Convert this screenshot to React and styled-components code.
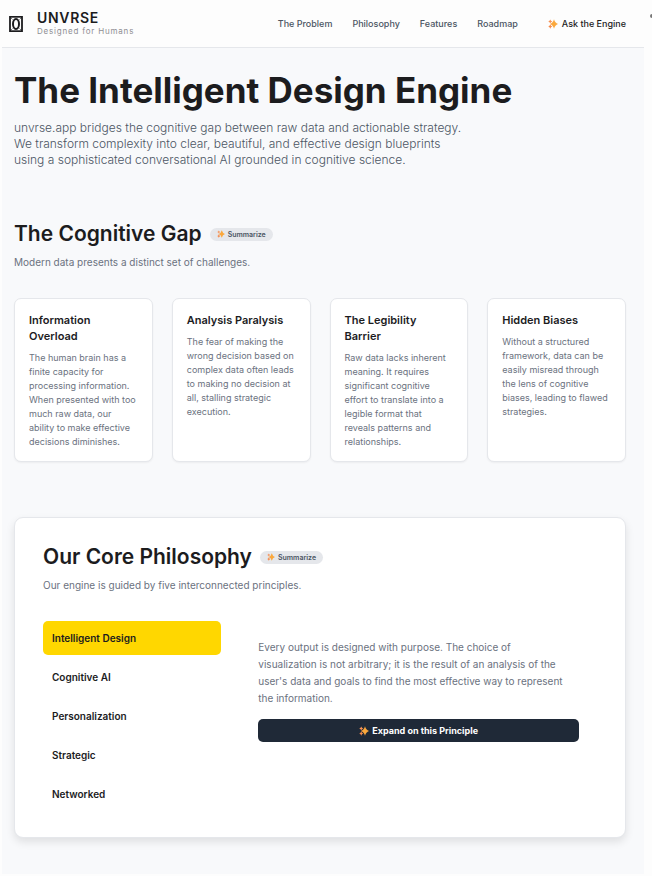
import { useState } from 'react'
import styled, { createGlobalStyle } from 'styled-components'

const GlobalStyle = createGlobalStyle`
    * {
        box-sizing: border-box;
    }
    body {
        margin: 0;
        background-color: #fdfdfd;
        color: #1c1c1e;
        font-family: Inter, 'Liberation Sans', sans-serif;
    }
    h1, h2, h3, p {
        margin: 0;
    }
    button {
        font-family: inherit;
        border: none;
        cursor: pointer;
    }
`

const Page = styled.div`
    position: relative;
    padding: 0 8px 2px 2px;
`
const ScrollMark = styled.span`
    position: absolute;
    top: 14px;
    right: 0;
    width: 2px;
    height: 4px;
    border-radius: 2px 0 0 2px;
    background-color: #777;
`
const Header = styled.header`
    display: flex;
    align-items: center;
    justify-content: space-between;
    height: 48px;
    padding: 0 18px 0 7px;
    border-bottom: 1px solid #e5e7eb;
`
const Brand = styled.a`
    display: flex;
    align-items: center;
    gap: 14px;
    color: inherit;
    text-decoration: none;
`
const BrandText = styled.span`
    display: flex;
    flex-direction: column;
`
const BrandName = styled.span`
    font-size: 14px;
    font-weight: 600;
    line-height: 14px;
    letter-spacing: 0.05em;
`
const Tagline = styled.span`
    font-size: 8px;
    line-height: 12px;
    letter-spacing: 0.1em;
    color: #8e8e93;
`
const Nav = styled.nav`
    display: flex;
    align-items: center;
    gap: 20px;
`
const NavLink = styled.a`
    font-size: 9px;
    font-weight: 500;
    color: #4b5563;
    text-decoration: none;
`
const AskButton = styled.button`
    display: flex;
    align-items: center;
    gap: 4px;
    margin-left: 10px;
    padding: 0;
    background: none;
    font-size: 9px;
    font-weight: 500;
    color: #1c1c1e;
`
const Main = styled.main`
    padding: 24px 18px 36px 12px;
    background-color: #f8f9fb;
`
const Title = styled.h1`
    font-size: 35px;
    font-weight: 700;
    line-height: 36px;
`
const Lead = styled.p`
    max-width: 450px;
    margin-top: 12px;
    font-size: 12px;
    font-weight: 300;
    line-height: 16px;
    color: #4b5563;
`
const Section = styled.section`
    margin-top: 54px;
`
const Heading = styled.div`
    display: flex;
    align-items: center;
    gap: 8px;
`
const SectionTitle = styled.h2`
    font-size: 21px;
    font-weight: 600;
    line-height: 24px;
`
const SummaryButton = styled.button`
    display: flex;
    align-items: center;
    gap: 3px;
    height: 13px;
    padding: 0 7px;
    border-radius: 7px;
    background-color: #e5e7eb;
    font-size: 7px;
    font-weight: 600;
    color: #4b5563;
`
const Intro = styled.p`
    margin-top: 8px;
    font-size: 10px;
    line-height: 16px;
    color: #6b7280;
`
const Cards = styled.div`
    display: grid;
    grid-template-columns: repeat(4, 1fr);
    gap: 19px;
    margin-top: 28px;
`
const Card = styled.article`
    padding: 13px 14px 12px;
    border: 1px solid #e5e7eb;
    border-radius: 7px;
    background-color: #fff;
    box-shadow: 0 1px 2px rgba(0, 0, 0, 0.05);
`
const CardTitle = styled.h3`
    font-size: 11px;
    font-weight: 600;
    line-height: 16px;
`
const CardText = styled.p`
    margin-top: 7px;
    font-size: 9px;
    line-height: 14px;
    color: #6b7280;
`
const Panel = styled.section`
    margin-top: 55px;
    padding: 27px 28px 26px;
    border: 1px solid #e5e7eb;
    border-radius: 9px;
    background-color: #fff;
    box-shadow: 0 4px 8px rgba(0, 0, 0, 0.1);
`
const Principles = styled.div`
    display: grid;
    grid-template-columns: 1fr 2fr;
    gap: 19px;
    margin-top: 28px;
`
const Tabs = styled.div`
    display: flex;
    flex-direction: column;
    gap: 5px;
`
const Tab = styled.button`
    height: 34px;
    padding: 0 9px;
    border-radius: 5px;
    background-color: ${({ $active }) => ($active ? '#ffd700' : 'transparent')};
    font-size: 10px;
    font-weight: 600;
    text-align: left;
    color: #1c1c1e;
`
const TabPanel = styled.div`
    padding: 18px;
`
const TabText = styled.p`
    max-width: 308px;
    font-size: 10px;
    line-height: 17px;
    color: #6b7280;
`
const ExpandButton = styled.button`
    display: flex;
    align-items: center;
    justify-content: center;
    gap: 3px;
    width: 100%;
    height: 23px;
    margin-top: 12px;
    border-radius: 5px;
    background-color: #1f2937;
    font-size: 9px;
    font-weight: 700;
    color: #fff;
`

const problems = [
    {
        title: 'Information Overload',
        text: 'The human brain has a finite capacity for processing information. When presented with too much raw data, our ability to make effective decisions diminishes.'
    },
    {
        title: 'Analysis Paralysis',
        text: 'The fear of making the wrong decision based on complex data often leads to making no decision at all, stalling strategic execution.'
    },
    {
        title: 'The Legibility Barrier',
        text: 'Raw data lacks inherent meaning. It requires significant cognitive effort to translate into a legible format that reveals patterns and relationships.'
    },
    {
        title: 'Hidden Biases',
        text: 'Without a structured framework, data can be easily misread through the lens of cognitive biases, leading to flawed strategies.'
    }
]

const principles = [
    'Intelligent Design',
    'Cognitive AI',
    'Personalization',
    'Strategic',
    'Networked'
]

const Logo = () => (
    <svg width='14' height='16' viewBox='0 0 14 16' fill='none' stroke='#1c1c1e'>
        <rect x='1' y='0.8' width='12' height='14.4' strokeWidth='1.8' />
        <ellipse cx='7' cy='8' rx='3' ry='5' strokeWidth='2' />
        <path d='M1 1l2.5 2.5M13 1l-2.5 2.5M1 15l2.5-2.5M13 15l-2.5-2.5' strokeWidth='0.6' />
    </svg>
)

const Sparkles = ({ size = 10 }) => (
    <svg width={size} height={size} viewBox='0 0 20 20' aria-hidden='true'>
        <path
            d='M12 .5q2 7.500 8 9.500q-6 2-8 9.500q-2-7.500-8-9.500q6-2 8-9.500z'
            fill='#fba83c'
        />
        <path d='M4.500 1q.9 3.100 4 4q-3.100.9-4 4q-.9-3.100-4-4q3.100-.9 4-4z' fill='#f79256' />
        <path d='M4.500 10.500q.9 3.600 4 4.500q-3.100.9-4 4.500q-.9-3.600-4-4.500q3.100-.9 4-4.500z' fill='#f58a4b' />
    </svg>
)

const Summarize = () => (
    <SummaryButton type='button'>
        <Sparkles size={8} />
        Summarize
    </SummaryButton>
)

export default function App() {
    const [active, setActive] = useState(principles[0])
    return (
        <>
            <GlobalStyle />
            <Page>
                <ScrollMark />
                <Header>
                    <Brand href='#top'>
                        <Logo />
                        <BrandText>
                            <BrandName>UNVRSE</BrandName>
                            <Tagline>Designed for Humans</Tagline>
                        </BrandText>
                    </Brand>
                    <Nav>
                        <NavLink href='#problem'>The Problem</NavLink>
                        <NavLink href='#philosophy'>Philosophy</NavLink>
                        <NavLink href='#features'>Features</NavLink>
                        <NavLink href='#roadmap'>Roadmap</NavLink>
                        <AskButton type='button'>
                            <Sparkles />
                            Ask the Engine
                        </AskButton>
                    </Nav>
                </Header>
                <Main id='top'>
                    <Title>The Intelligent Design Engine</Title>
                    <Lead>
                        unvrse.app bridges the cognitive gap between raw data and actionable
                        strategy. We transform complexity into clear, beautiful, and effective
                        design blueprints using a sophisticated conversational AI grounded in
                        cognitive science.
                    </Lead>
                    <Section id='problem'>
                        <Heading>
                            <SectionTitle>The Cognitive Gap</SectionTitle>
                            <Summarize />
                        </Heading>
                        <Intro>Modern data presents a distinct set of challenges.</Intro>
                        <Cards>
                            {problems.map(({ title, text }) => (
                                <Card key={title}>
                                    <CardTitle>{title}</CardTitle>
                                    <CardText>{text}</CardText>
                                </Card>
                            ))}
                        </Cards>
                    </Section>
                    <Panel id='philosophy'>
                        <Heading>
                            <SectionTitle>Our Core Philosophy</SectionTitle>
                            <Summarize />
                        </Heading>
                        <Intro>Our engine is guided by five interconnected principles.</Intro>
                        <Principles>
                            <Tabs role='tablist'>
                                {principles.map((name) => (
                                    <Tab
                                        key={name}
                                        type='button'
                                        role='tab'
                                        aria-selected={name === active}
                                        $active={name === active}
                                        onClick={() => setActive(name)}>
                                        {name}
                                    </Tab>
                                ))}
                            </Tabs>
                            <TabPanel role='tabpanel'>
                                <TabText>
                                    Every output is designed with purpose. The choice of
                                    visualization is not arbitrary; it is the result of an analysis
                                    of the user's data and goals to find the most effective way to
                                    represent the information.
                                </TabText>
                                <ExpandButton type='button'>
                                    <Sparkles />
                                    Expand on this Principle
                                </ExpandButton>
                            </TabPanel>
                        </Principles>
                    </Panel>
                </Main>
            </Page>
        </>
    )
}
